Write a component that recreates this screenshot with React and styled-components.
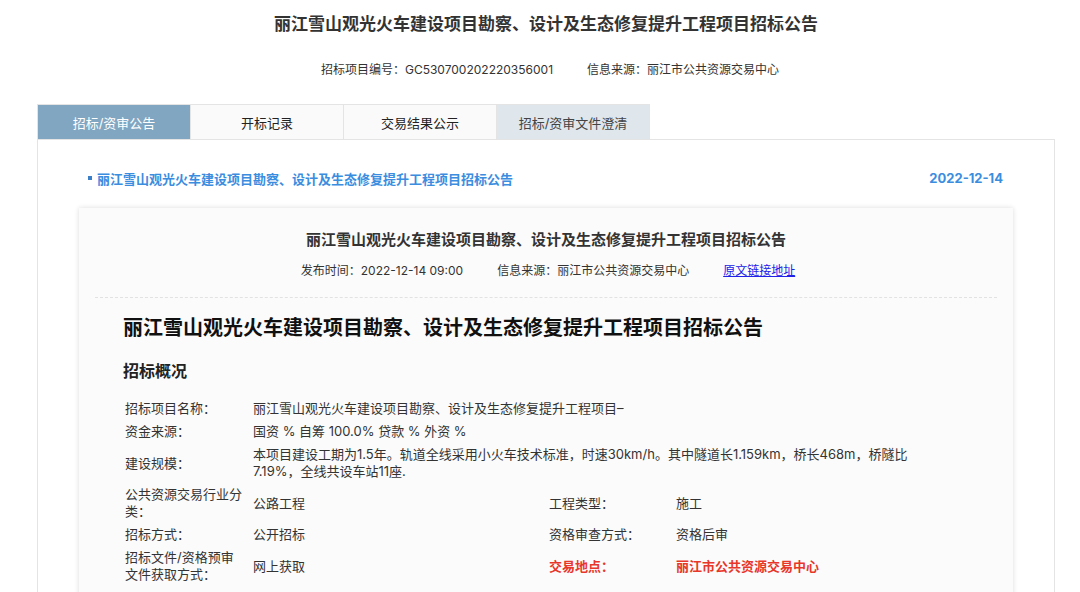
import React from "react";
import styled, { createGlobalStyle } from "styled-components";

const GlobalStyle = createGlobalStyle`
  body {
    margin: 0;
    background: #fff;
    color: #333;
    font-family: Inter, "Noto Sans CJK SC", sans-serif;
  }
`;

const tabs = ["招标/资审公告", "开标记录", "交易结果公示", "招标/资审文件澄清"];

const rows = [
  { label: "招标项目名称：", value: "丽江雪山观光火车建设项目勘察、设计及生态修复提升工程项目–" },
  { label: "资金来源：", value: "国资 % 自筹 100.0% 贷款 % 外资 %" },
  {
    label: "建设规模：",
    value:
      "本项目建设工期为1.5年。轨道全线采用小火车技术标准，时速30km/h。其中隧道长1.159km，桥长468m，桥隧比7.19%，全线共设车站11座.",
  },
  { label: "公共资源交易行业分类：", value: "公路工程", label2: "工程类型：", value2: "施工" },
  { label: "招标方式：", value: "公开招标", label2: "资格审查方式：", value2: "资格后审" },
  {
    label: "招标文件/资格预审文件获取方式：",
    value: "网上获取",
    label2: "交易地点：",
    value2: "丽江市公共资源交易中心",
    red: true,
  },
];

const App = () => {
  return (
    <>
      <GlobalStyle />
      <Page>
        <PageTitle>丽江雪山观光火车建设项目勘察、设计及生态修复提升工程项目招标公告</PageTitle>
        <TopMeta>
          <span>招标项目编号：GC530700202220356001</span>
          <span>信息来源：丽江市公共资源交易中心</span>
        </TopMeta>
        <Tabs>
          {tabs.map((t, i) => (
            <Tab key={t} $variant={i === 0 ? "active" : i === 3 ? "muted" : "plain"}>
              {t}
            </Tab>
          ))}
        </Tabs>
        <Panel>
          <ListRow>
            <ListTitle>丽江雪山观光火车建设项目勘察、设计及生态修复提升工程项目招标公告</ListTitle>
            <ListDate>2022-12-14</ListDate>
          </ListRow>
          <Card>
            <CardTitle>丽江雪山观光火车建设项目勘察、设计及生态修复提升工程项目招标公告</CardTitle>
            <CardMeta>
              <span>发布时间：2022-12-14 09:00</span>
              <span>信息来源：丽江市公共资源交易中心</span>
              <SourceLink href="#">原文链接地址</SourceLink>
            </CardMeta>
            <Divider />
            <Body>
              <Heading>丽江雪山观光火车建设项目勘察、设计及生态修复提升工程项目招标公告</Heading>
              <SubHeading>招标概况</SubHeading>
              <InfoTable>
                {rows.map((r) => (
                  <React.Fragment key={r.label}>
                    <Cell $label>{r.label}</Cell>
                    {r.label2 ? (
                      <>
                        <Cell>{r.value}</Cell>
                        <Cell $red={r.red}>{r.label2}</Cell>
                        <Cell $red={r.red}>{r.value2}</Cell>
                      </>
                    ) : (
                      <Cell $span>{r.value}</Cell>
                    )}
                  </React.Fragment>
                ))}
              </InfoTable>
            </Body>
          </Card>
        </Panel>
      </Page>
    </>
  );
};

const Page = styled.div`
  width: 1018px;
  margin-left: 37px;
  padding-top: 12px;
`;

const PageTitle = styled.h1`
  margin: 0;
  font-size: 17px;
  line-height: 24px;
  font-weight: 700;
  text-align: center;
  color: #333;
`;

const TopMeta = styled.div`
  display: flex;
  justify-content: center;
  gap: 34px;
  margin-top: 24px;
  font-size: 12px;
  line-height: 20px;
  color: #333;
  padding-left: 8px;
`;

const Tabs = styled.div`
  display: flex;
  margin-top: 24px;
`;

const Tab = styled.div`
  width: 153px;
  height: 35px;
  display: flex;
  align-items: center;
  justify-content: center;
  font-size: 13px;
  box-sizing: border-box;
  border-top: 1px solid #e4e4e4;
  border-right: 1px solid #e4e4e4;
  background: ${({ $variant }) =>
    $variant === "active" ? "#80a6c2" : $variant === "muted" ? "#dfe6ec" : "#fafafa"};
  color: ${({ $variant }) => ($variant === "active" ? "#fff" : $variant === "muted" ? "#444" : "#222")};
  &:first-child {
    width: 154px;
    border-left: 1px solid #e4e4e4;
  }
`;

const Panel = styled.div`
  border: 1px solid #e4e4e4;
  border-bottom: none;
  padding: 28px 0 0;
  height: 460px;
  box-sizing: border-box;
`;

const ListRow = styled.div`
  display: flex;
  justify-content: space-between;
  align-items: center;
  padding: 0 51px 0 50px;
  height: 20px;
  font-size: 13px;
  font-weight: 600;
  color: #3b8de0;
`;

const ListTitle = styled.span`
  display: flex;
  align-items: center;
  &::before {
    content: "";
    width: 4px;
    height: 4px;
    background: #3b7fc8;
    margin-right: 5px;
  }
`;

const ListDate = styled.span`
  font-weight: 700;
`;

const Card = styled.div`
  margin: 20px 41px 0 41px;
  padding: 20px 16px 0;
  background: #fbfbfb;
  box-shadow: 0 0 5px rgba(0, 0, 0, 0.14);
  height: 400px;
`;

const CardTitle = styled.h2`
  margin: 0;
  font-size: 15px;
  line-height: 24px;
  font-weight: 700;
  text-align: center;
  color: #333;
`;

const CardMeta = styled.div`
  display: flex;
  justify-content: center;
  gap: 34px;
  margin-top: 9px;
  font-size: 12px;
  line-height: 20px;
  color: #333;
  padding-left: 4px;
`;

const SourceLink = styled.a`
  color: #2020e8;
  text-decoration: underline;
`;

const Divider = styled.div`
  margin-top: 16px;
  border-top: 1px dashed #e2e2e2;
`;

const Body = styled.div`
  padding-left: 28px;
`;

const Heading = styled.h3`
  margin: 16px 0 0;
  font-size: 20px;
  line-height: 28px;
  font-weight: 700;
  color: #111;
`;

const SubHeading = styled.h4`
  margin: 17px 0 0;
  font-size: 16px;
  line-height: 24px;
  font-weight: 700;
  color: #222;
`;

const InfoTable = styled.div`
  display: grid;
  grid-template-columns: 128px 296px 127px 294px;
  align-items: center;
  margin-top: 14px;
  padding-left: 2px;
  font-size: 13px;
  line-height: 17px;
  color: #333;
`;

const Cell = styled.div`
  padding: 3px ${({ $span, $label }) => ($span ? "48px" : $label ? "8px" : "0")} 3px 0;
  grid-column: ${({ $span }) => ($span ? "2 / 5" : "auto")};
  color: ${({ $red }) => ($red ? "#e8362a" : "#333")};
  font-weight: ${({ $red }) => ($red ? 700 : 400)};
`;

export default App;
